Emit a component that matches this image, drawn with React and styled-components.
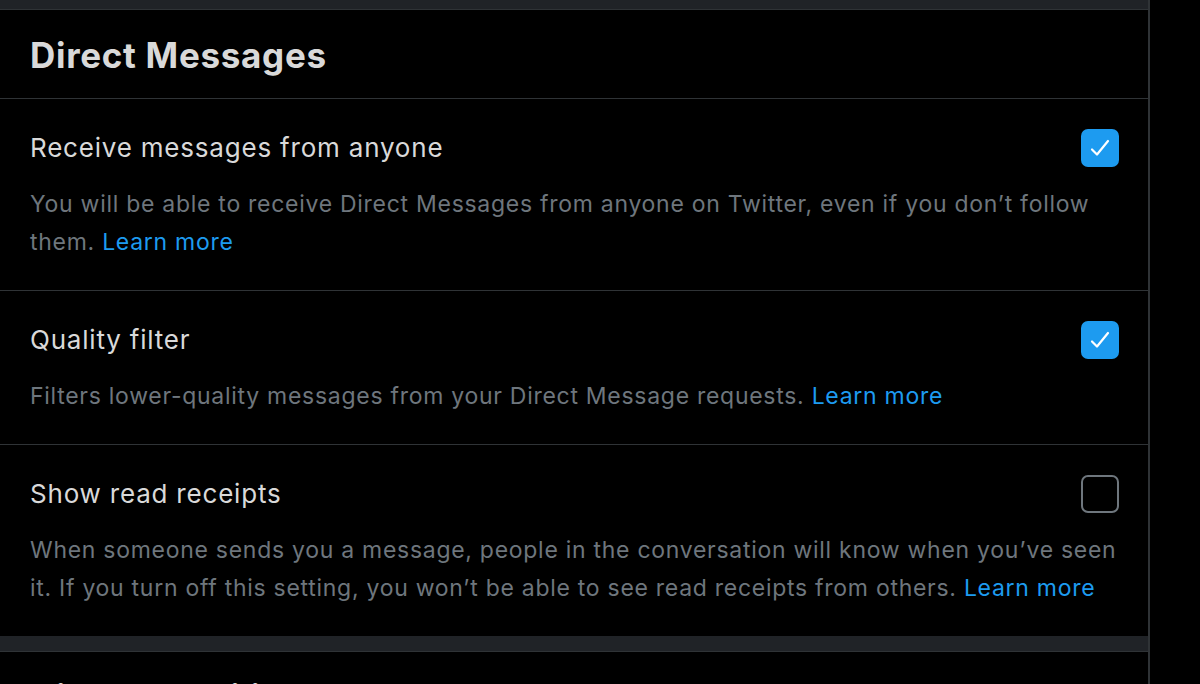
import React from "react";
import styled, { createGlobalStyle } from "styled-components";

const Global = createGlobalStyle`
  html, body { margin: 0; padding: 0; background: #000; }
  body { font-family: Inter, "Noto Sans", "Liberation Sans", sans-serif; -webkit-font-smoothing: antialiased; }
`;

const Page = styled.div`
  display: flex;
  width: 1200px;
  height: 684px;
  overflow: hidden;
  background: #000;
`;

const Column = styled.main`
  width: 1148px;
  flex: none;
  border-right: 2px solid #2f3336;
  display: flex;
  flex-direction: column;
`;

const Band = styled.div`
  height: ${(p) => p.$h}px;
  flex: none;
  background: #202327;
  border-bottom: 1px solid #2f3336;
`;

const Heading = styled.h2`
  margin: 0;
  padding: 25px 30px 23px;
  font-size: 35px;
  line-height: 40px;
  font-weight: 700;
  color: #d9d9d9;
  letter-spacing: 0.7px;
  border-bottom: 1px solid #2f3336;
  white-space: nowrap;
`;

const Row = styled.section`
  padding: 30px 29px 29px 30px;
  border-bottom: ${(p) => (p.$last ? "none" : "1px solid #2f3336")};
  display: flex;
  flex-direction: column;
  gap: 18px;
`;

const TitleLine = styled.div`
  display: flex;
  align-items: center;
  justify-content: space-between;
`;

const Title = styled.span`
  font-size: 26px;
  line-height: 32px;
  letter-spacing: 0.8px;
  color: #d9d9d9;
`;

const Desc = styled.p`
  margin: 0;
  font-size: 23px;
  line-height: 38px;
  letter-spacing: 0.72px;
  color: #6e767d;
`;

const Link = styled.a`
  color: #1d9bf0;
  text-decoration: none;
`;

const Box = styled.span`
  width: 38px;
  height: 38px;
  box-sizing: border-box;
  border-radius: 7px;
  flex: none;
  display: flex;
  align-items: center;
  justify-content: center;
  background: ${(p) => (p.$on ? "#1d9bf0" : "transparent")};
  border: ${(p) => (p.$on ? "none" : "2.5px solid #6e767d")};
`;

const Check = ({ on }) => (
  <Box $on={on}>
    {on && (
      <svg width="24" height="24" viewBox="0 0 24 24" fill="none">
        <path d="M4 13.5 L9 18.5 L20 5" stroke="#fff" strokeWidth="2.2" strokeLinecap="round" strokeLinejoin="round" />
      </svg>
    )}
  </Box>
);

const rows = [
  {
    title: "Receive messages from anyone",
    on: true,
    desc: "You will be able to receive Direct Messages from anyone on Twitter, even if you don\u2019t follow them.",
  },
  {
    title: "Quality filter",
    on: true,
    desc: "Filters lower-quality messages from your Direct Message requests.",
  },
  {
    title: "Show read receipts",
    on: false,
    desc: "When someone sends you a message, people in the conversation will know when you\u2019ve seen it. If you turn off this setting, you won\u2019t be able to see read receipts from others.",
    last: true,
  },
];

export default function App() {
  return (
    <Page>
      <Global />
      <Column>
        <Band $h={9} />
        <Heading>Direct Messages</Heading>
        {rows.map((r) => (
          <Row key={r.title} $last={r.last}>
            <TitleLine>
              <Title>{r.title}</Title>
              <Check on={r.on} />
            </TitleLine>
            <Desc>
              {r.desc} <Link href="#">Learn more</Link>
            </Desc>
          </Row>
        ))}
        <Band $h={15} />
        <Heading>Discoverability and contacts</Heading>
      </Column>
    </Page>
  );
}
